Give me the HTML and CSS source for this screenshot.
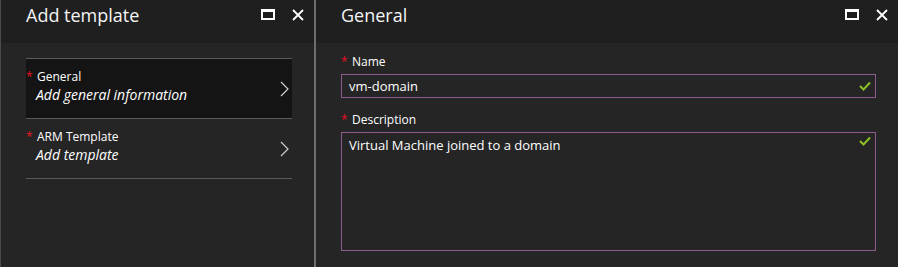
FILE: index.html
```html
<!DOCTYPE html>
<html>

<head>
    <link rel="stylesheet" href="styles.css">
</head>

<body>
    <div class="blades">
        <div class="blade blade_left">
            <div class="blade_head">
                <p class="blade_title">Add template</p>
                <div class="blade_icons">
                    <span class="icon_max"></span>
                    <svg class="icon_close" width="12" height="12" viewBox="0 0 12 12">
                        <path d="M1 1 L11 11 M11 1 L1 11" stroke="#fff" stroke-width="1.8" />
                    </svg>
                </div>
            </div>
            <div class="blade_body">
                <div class="steps">
                    <a href="./" class="step step_active">
                        <div class="step_text">
                            <p class="step_label"><span class="req">*</span>General</p>
                            <p class="step_value">Add general information</p>
                        </div>
                        <svg class="chevron" width="9" height="16" viewBox="0 0 9 16">
                            <path d="M1 1 L8 8 L1 15" stroke="#cfcfcf" stroke-width="1.2" fill="none" />
                        </svg>
                    </a>
                    <a href="./" class="step">
                        <div class="step_text">
                            <p class="step_label"><span class="req">*</span>ARM Template</p>
                            <p class="step_value">Add template</p>
                        </div>
                        <svg class="chevron" width="9" height="16" viewBox="0 0 9 16">
                            <path d="M1 1 L8 8 L1 15" stroke="#cfcfcf" stroke-width="1.2" fill="none" />
                        </svg>
                    </a>
                </div>
            </div>
        </div>
        <div class="blade blade_right">
            <div class="blade_head">
                <p class="blade_title">General</p>
                <div class="blade_icons">
                    <span class="icon_max"></span>
                    <svg class="icon_close" width="12" height="12" viewBox="0 0 12 12">
                        <path d="M1 1 L11 11 M11 1 L1 11" stroke="#fff" stroke-width="1.8" />
                    </svg>
                </div>
            </div>
            <div class="blade_body form">
                <label class="field_label"><span class="req">*</span>Name</label>
                <div class="input">
                    <span class="input_text">vm-domain</span>
                    <svg class="check" width="12" height="10" viewBox="0 0 12 10">
                        <path d="M1 5 L4.5 8.5 L11 1.5" stroke="#8cbf26" stroke-width="2" fill="none" />
                    </svg>
                </div>
                <label class="field_label"><span class="req">*</span>Description</label>
                <div class="input textarea">
                    <span class="input_text">Virtual Machine joined to a domain</span>
                    <svg class="check" width="12" height="10" viewBox="0 0 12 10">
                        <path d="M1 5 L4.5 8.5 L11 1.5" stroke="#8cbf26" stroke-width="2" fill="none" />
                    </svg>
                </div>
            </div>
        </div>
    </div>
</body>

</html>
```

FILE: styles.css
```css
body {
    margin: 0;
    background-color: #252525;
    color: white;
    font-family: "Open Sans", "Noto Sans", sans-serif;
    overflow: hidden;
}

p {
    margin: 0;
}

a {
    text-decoration: none;
    color: white;
}

.blades {
    display: flex;
    height: 267px;
}

.blade {
    display: flex;
    flex-direction: column;
}

.blade_left {
    width: 313px;
    border-left: 1px solid #4a4a4a;
    border-right: 2px solid #6e6e6e;
}

.blade_right {
    flex: 1;
}

.blade_head {
    height: 43px;
    background-color: #1f1f1f;
    display: flex;
    align-items: center;
    justify-content: space-between;
    padding: 0 10px 0 25px;
}

.blade_title {
    font-size: 18px;
    margin-top: -14px;
    color: #f4f4f4;
}

.blade_icons {
    display: flex;
    align-items: center;
    gap: 17px;
    margin-top: -14px;
}

.icon_max {
    display: block;
    width: 10px;
    height: 6px;
    border: 2px solid white;
    border-top-width: 3px;
}

.icon_close {
    display: block;
}

.blade_body {
    flex: 1;
}

.steps {
    margin: 15px 22px 0 25px;
    border-top: 1px solid #5a5a5a;
}

.step {
    display: flex;
    align-items: center;
    justify-content: space-between;
    height: 59px;
    border-bottom: 1px solid #5a5a5a;
    padding: 0 3px 0 0;
}

.step_active {
    background-color: #141414;
}

.step_text {
    margin-top: -4px;
}

.step_label {
    font-size: 12px;
    line-height: 16px;
}

.step_value {
    font-size: 14px;
    font-style: italic;
    margin-left: 10px;
    line-height: 20px;
}

.req {
    color: #e81123;
    font-size: 12px;
    display: inline-block;
    width: 11px;
}

.form {
    padding: 11px 22px 0 25px;
}

.field_label {
    display: block;
    font-size: 12px;
    line-height: 16px;
    margin-bottom: 4px;
}

.input {
    display: flex;
    justify-content: space-between;
    align-items: center;
    height: 22px;
    border: 1px solid #8e5a8e;
    padding: 0 4px 0 7px;
    font-size: 13px;
    margin-bottom: 14px;
}

.textarea {
    align-items: flex-start;
    padding-top: 3px;
    box-sizing: border-box;
    height: 119px;
}

.check {
    display: block;
}
```
